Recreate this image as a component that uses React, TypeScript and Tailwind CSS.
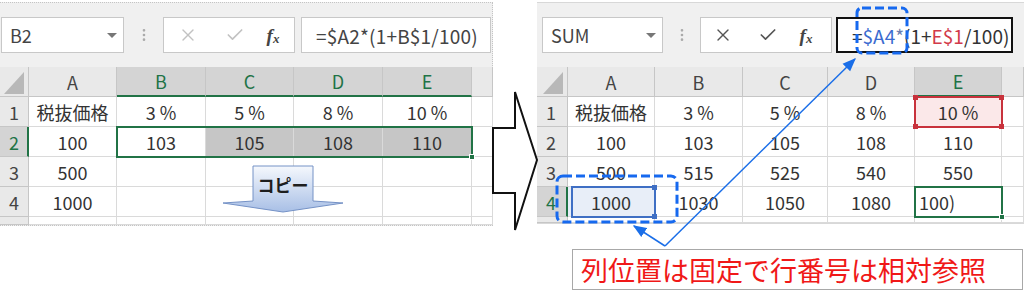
import type { ReactNode } from 'react';
import { X, Check, EllipsisVertical } from 'lucide-react';

const gridL =
  'grid grid-cols-[29px_88px_89px_88px_89px_89px_21px] grid-rows-[30px_30px_30px_30px_30px_8px]';
const gridR =
  'grid grid-cols-[31px_87px_88px_85px_87px_87px_22px] grid-rows-[30px_30px_30px_30px_30px_6px]';

function Corner() {
  return (
    <div className="relative border-r border-b border-[#c6c6c6] bg-[#e9e9e9]">
      <svg className="absolute right-[4px] bottom-[2px]" width="20" height="22" viewBox="0 0 20 22">
        <polygon points="20,0 20,22 0,22" fill="#b8b8b8" />
      </svg>
    </div>
  );
}

function Hd({ children, on }: { children?: ReactNode; on?: boolean }) {
  return (
    <div
      className={
        on
          ? 'flex items-center justify-center border-r border-[#c6c6c6] border-b-2 border-b-[#217346] bg-[#d4d4d4] text-[#217346]'
          : 'flex items-center justify-center border-r border-b border-[#c6c6c6] bg-[#e9e9e9] text-[#444]'
      }
    >
      {children}
    </div>
  );
}

function Rh({ children, on }: { children?: ReactNode; on?: boolean }) {
  return (
    <div
      className={
        on
          ? 'flex items-center pl-[9px] border-b border-[#c6c6c6] border-r-2 border-r-[#217346] bg-[#d4d4d4] text-[#217346]'
          : 'flex items-center pl-[9px] border-r border-b border-[#c6c6c6] bg-[#e9e9e9] text-[#444]'
      }
    >
      {children}
    </div>
  );
}

function C({ children, cls = 'bg-white justify-center' }: { children?: ReactNode; cls?: string }) {
  return (
    <div className={`flex items-center border-r border-b border-[#dadada] text-[18px] text-[#333] ${cls}`}>
      {children}
    </div>
  );
}

function Toolbar({
  name,
  active,
  formula,
  right,
}: {
  name: string;
  active?: boolean;
  formula: ReactNode;
  right?: boolean;
}) {
  return (
    <div className={`flex h-[64px] items-start pt-[14px] ${right ? 'pl-[5px] pr-[11px]' : 'pl-[1px] pr-[1px]'}`}>
      <div
        className={`flex h-[36px] items-center border border-[#c8c8c8] bg-white pl-[8px] text-[18px] text-[#444] ${
          right ? 'w-[121px]' : 'w-[123px]'
        }`}
      >
        <span>{name}</span>
        <span className="ml-auto mr-[6px] h-0 w-0 border-x-[5px] border-t-[5px] border-x-transparent border-t-[#777]" />
      </div>
      <div className={`flex h-[36px] items-center justify-center ${right ? 'w-[37px]' : 'w-[39px]'}`}>
        <EllipsisVertical size={16} className="text-[#aaa]" />
      </div>
      <div className="flex h-[36px] w-[132px] items-center border border-[#c8c8c8] bg-white">
        <span className={`flex justify-center ${right ? 'w-[44px]' : 'w-[48px]'}`}>
          <X size={20} strokeWidth={1.6} className={active ? 'text-[#555]' : 'text-[#c2c2c2]'} />
        </span>
        <span className="flex w-[46px] justify-center">
          <Check size={20} strokeWidth={2} className={active ? 'text-[#555]' : 'text-[#c2c2c2]'} />
        </span>
        <span className="flex w-[30px] items-end justify-center font-['Liberation_Serif',serif] text-[19px] font-bold italic text-[#444]">
          f<span className="text-[13px]">x</span>
        </span>
      </div>
      <div
        className={`ml-auto flex h-[36px] items-center bg-white pl-[14px] text-[19px] ${
          right ? 'w-[177px] border-2 border-[#111]' : 'w-[190px] border border-[#c8c8c8]'
        }`}
      >
        {formula}
      </div>
    </div>
  );
}

function Handle({ color }: { color: string }) {
  return <span className={`absolute -right-[4px] -bottom-[4px] h-[6px] w-[6px] border border-white ${color}`} />;
}

export default function App() {
  return (
    <div className="relative flex h-[303px] w-[1024px] items-start overflow-hidden bg-white pt-[2px] font-['Noto_Sans_CJK_JP','Noto_Sans',sans-serif] text-[18px] leading-none">
      {/* left sheet */}
      <div className="w-[493px] border-t border-r border-b border-dotted border-[#c4c4c4] bg-[#f0f0f0]">
        <Toolbar
          name="B2"
          formula={<span className="tracking-[0.2px] text-[#444]">=$A2*(1+B$1/100)</span>}
        />
        <div className="relative">
          <div className={gridL}>
            <Corner />
            <Hd>A</Hd>
            <Hd on>B</Hd>
            <Hd on>C</Hd>
            <Hd on>D</Hd>
            <Hd on>E</Hd>
            <Hd />

            <Rh>1</Rh>
            <C>税抜価格</C>
            <C>3 %</C>
            <C>5 %</C>
            <C>8 %</C>
            <C>10 %</C>
            <C />

            <Rh on>2</Rh>
            <C>100</C>
            <C>103</C>
            <C cls="bg-[#c6c6c6] justify-center">105</C>
            <C cls="bg-[#c6c6c6] justify-center">108</C>
            <C cls="bg-[#c6c6c6] justify-center">110</C>
            <C />

            <Rh>3</Rh>
            <C>500</C>
            <C />
            <C />
            <C />
            <C />
            <C />

            <Rh>4</Rh>
            <C>1000</C>
            <C />
            <C />
            <C />
            <C />
            <C />

            <Rh />
            <C />
            <C />
            <C />
            <C />
            <C />
            <C />
          </div>
          <div className={`pointer-events-none absolute inset-0 ${gridL}`}>
            <div className="relative col-start-3 col-end-7 row-start-3 row-end-4 -m-px border-2 border-[#217346]">
              <Handle color="bg-[#217346]" />
            </div>
          </div>
        </div>
      </div>

      <div className="w-[44px] shrink-0" />

      {/* right sheet */}
      <div className="flex w-[487px] flex-col">
        <div className="border-t border-b border-[#d8d8d8] bg-[#f0f0f0]">
          <Toolbar
            right
            active
            name="SUM"
            formula={
              <span className="flex items-center text-[#333]">
                <span>=</span>
                <span className="text-[#3a6bd0]">$A4</span>
                <span className="text-[#6a7fb0]">*</span>
                <span>(1+</span>
                <span className="text-[#d23a4a]">E$1</span>
                <span>/100)</span>
                <span className="ml-[2px] inline-block h-[22px] w-[2px] bg-[#111]" />
              </span>
            }
          />
          <div className="relative">
            <div className={gridR}>
              <Corner />
              <Hd>A</Hd>
              <Hd>B</Hd>
              <Hd>C</Hd>
              <Hd>D</Hd>
              <Hd on>E</Hd>
              <Hd />

              <Rh>1</Rh>
              <C>税抜価格</C>
              <C>3 %</C>
              <C>5 %</C>
              <C>8 %</C>
              <C cls="bg-[#fbe8e9] justify-center">10 %</C>
              <C />

              <Rh>2</Rh>
              <C>100</C>
              <C>103</C>
              <C>105</C>
              <C>108</C>
              <C>110</C>
              <C />

              <Rh>3</Rh>
              <C>500</C>
              <C>515</C>
              <C>525</C>
              <C>540</C>
              <C>550</C>
              <C />

              <Rh on>4</Rh>
              <C cls="bg-[#e8eef8] justify-center">1000</C>
              <C>1030</C>
              <C>1050</C>
              <C>1080</C>
              <C cls="bg-white justify-start pl-[4px]">100)</C>
              <C />

              <Rh />
              <C />
              <C />
              <C />
              <C />
              <C />
              <C />
            </div>
            <div className={`pointer-events-none absolute inset-0 ${gridR}`}>
              <div className="relative col-start-6 col-end-7 row-start-2 row-end-3 -m-px border-2 border-[#c8323c]">
                <span className="absolute -left-[3px] -top-[3px] h-[5px] w-[5px] bg-[#c8323c]" />
                <span className="absolute -right-[3px] -top-[3px] h-[5px] w-[5px] bg-[#c8323c]" />
                <span className="absolute -left-[3px] -bottom-[3px] h-[5px] w-[5px] bg-[#c8323c]" />
                <span className="absolute -right-[3px] -bottom-[3px] h-[5px] w-[5px] bg-[#c8323c]" />
              </div>
              <div className="relative col-start-2 col-end-3 row-start-5 row-end-6 -m-px ml-[3px] border-2 border-[#3f6fc4]">
                <span className="absolute -right-[3px] -top-[3px] h-[5px] w-[5px] bg-[#3f6fc4]" />
                <span className="absolute -right-[3px] -bottom-[3px] h-[5px] w-[5px] bg-[#3f6fc4]" />
              </div>
              <div className="relative col-start-6 col-end-7 row-start-5 row-end-6 -m-px border-2 border-[#217346]">
                <Handle color="bg-[#217346]" />
              </div>
            </div>
          </div>
        </div>

        <div className="ml-[35px] mt-[25px] flex h-[41px] w-[451px] items-center border border-[#a8a8a8] bg-white pl-[8px] text-[27px] text-[#f01818]">
          列位置は固定で行番号は相対参照
        </div>
      </div>

      {/* annotations drawn over the sheets */}
      <svg className="pointer-events-none absolute inset-0" width="1024" height="303" viewBox="0 0 1024 303">
        <defs>
          <linearGradient id="copyFill" x1="0" y1="0" x2="0" y2="1">
            <stop offset="0" stopColor="#f5f8fd" />
            <stop offset="1" stopColor="#a8bfe6" />
          </linearGradient>
          <marker id="head" viewBox="0 0 10 10" refX="9" refY="5" markerWidth="9" markerHeight="9" orient="auto-start-reverse">
            <path d="M0,1 L10,5 L0,9 Z" fill="#1a6ee8" />
          </marker>
        </defs>

        <polygon
          points="253,166 313,166 313,201 343,203 283,212 223,203 253,201"
          fill="url(#copyFill)"
          stroke="#7592c6"
          strokeWidth="1"
        />
        <text x="283" y="192" textAnchor="middle" fontSize="17" fontWeight="700" fill="#1e1e1e" className="font-['Noto_Sans_CJK_JP',sans-serif]">
          コピー
        </text>

        <polygon
          points="493,128 515,128 515,92 537,160 515,230 515,193 493,193"
          fill="#fff"
          stroke="#111"
          strokeWidth="2"
          strokeLinejoin="miter"
        />

        <rect x="857" y="8" width="50" height="45" rx="5" fill="none" stroke="#1669ef" strokeWidth="3" strokeDasharray="9 4" />
        <rect x="557" y="176" width="120" height="46" rx="6" fill="none" stroke="#1669ef" strokeWidth="3" strokeDasharray="9 4" />

        <line x1="665" y1="246" x2="855" y2="59" stroke="#1a6ee8" strokeWidth="1.5" markerEnd="url(#head)" />
        <line x1="665" y1="246" x2="634" y2="226" stroke="#1a6ee8" strokeWidth="1.5" markerEnd="url(#head)" />
      </svg>
    </div>
  );
}
